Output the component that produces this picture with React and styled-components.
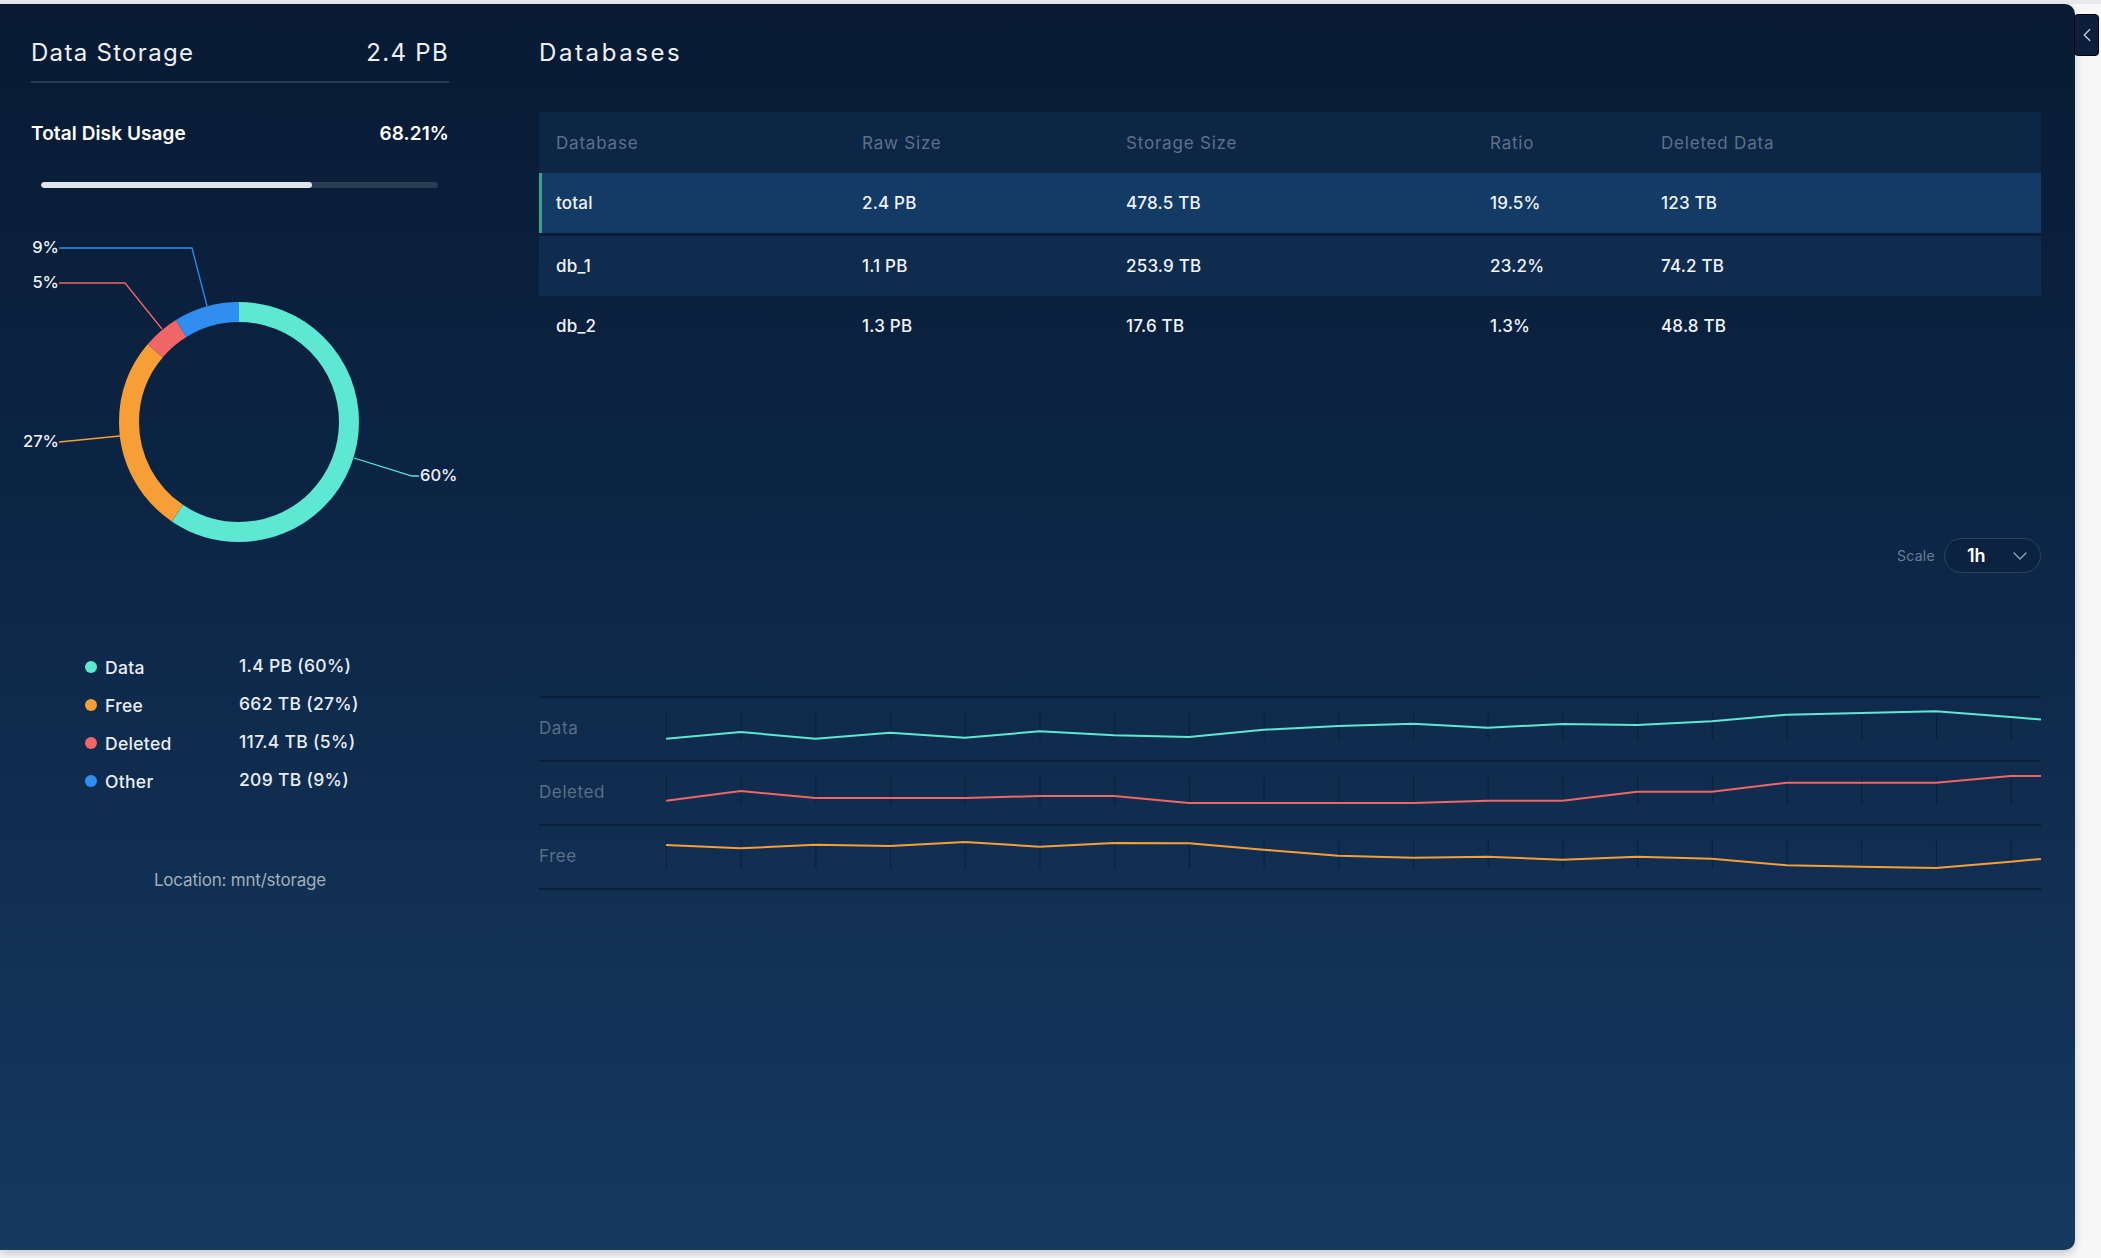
import React from "react"
import styled, { createGlobalStyle } from "styled-components"
import { ChevronDown, ChevronLeft } from "lucide-react"

const GlobalStyle = createGlobalStyle`
  html, body {
    margin: 0;
    padding: 0;
    background: #f6f6f7;
    font-family: Inter, "Open Sans", sans-serif;
  }
  * { box-sizing: border-box; }
`

const colors = {
  data: "#5ce8d2",
  free: "#f59f36",
  deleted: "#f06565",
  other: "#2f8eef",
}

const Page = styled.div`
  position: relative;
  width: 2101px;
  height: 1258px;
  padding-top: 4px;
  background: linear-gradient(180deg, #e8e9ec 0, #e8e9ec 4px, #f7f7f8 4px);
  overflow: hidden;
`

const Panel = styled.div`
  display: grid;
  grid-template-columns: 418px 1502px;
  column-gap: 90px;
  width: 2075px;
  height: 1246px;
  padding: 0 34px 0 31px;
  border-radius: 0 10px 10px 0;
  background: linear-gradient(180deg, #081a33 0%, #0c2545 40%, #15395f 100%);
  box-shadow: 0 4px 10px rgba(0, 0, 0, 0.18);
  color: #eef2f7;
`

const CollapseButton = styled.button`
  position: absolute;
  left: 2074px;
  top: 14px;
  width: 25px;
  height: 42px;
  padding: 0;
  display: flex;
  align-items: center;
  justify-content: center;
  background: #0b1f3b;
  border: 1.5px solid #000;
  border-radius: 4px;
  color: #c8d0da;
`

const Column = styled.div`
  display: flex;
  flex-direction: column;
`

const SectionHeader = styled.div`
  display: flex;
  justify-content: space-between;
  align-items: baseline;
  margin-top: 33px;
  padding-bottom: ${(p) => (p.$divider ? "12px" : "0")};
  border-bottom: ${(p) => (p.$divider ? "2px solid #2a3c54" : "none")};
  font-size: 24px;
  line-height: 32px;
  font-weight: 400;
  letter-spacing: ${(p) => (p.$divider ? "1.3px" : "2.6px")};
  color: #eef2f7;
`

const UsageRow = styled.div`
  display: flex;
  justify-content: space-between;
  margin-top: 39px;
  font-size: 19px;
  line-height: 24px;
  font-weight: 600;
  letter-spacing: 0.1px;
  color: #ffffff;
`

const Track = styled.div`
  margin: 36px 11px 0 10px;
  height: 6px;
  border-radius: 3px;
  background: #2b3d55;
  overflow: hidden;
`

const Fill = styled.div`
  height: 100%;
  border-radius: 3px;
  background: #dfe3ec;
`

const DonutSvg = styled.svg`
  display: block;
  margin-top: 41px;
  overflow: visible;
  font-family: Inter, "Open Sans", sans-serif;
`

const Legend = styled.div`
  display: grid;
  grid-template-columns: 154px auto;
  grid-auto-rows: 38px;
  margin: 89px 0 0 54px;
  font-size: 17.5px;
  font-weight: 500;
  color: #e8edf3;
`

const LegendLabel = styled.div`
  display: flex;
  align-items: center;
  gap: 8px;
  letter-spacing: 0.3px;
`

const LegendValue = styled.div`
  display: flex;
  align-items: center;
  margin-top: -3px;
  letter-spacing: 0.3px;
`

const Dot = styled.span`
  width: 12px;
  height: 12px;
  border-radius: 50%;
  background: ${(p) => p.$color};
`

const Location = styled.div`
  margin-top: 70px;
  text-align: center;
  font-size: 17px;
  line-height: 20px;
  letter-spacing: -0.2px;
  color: #a3adbb;
`

const Table = styled.div`
  display: flex;
  flex-direction: column;
  margin-top: 43px;
`

const TableRow = styled.div`
  display: grid;
  grid-template-columns: 306px 264px 364px 171px 1fr;
  align-items: center;
  height: ${(p) => (p.$head ? "61px" : p.$gap ? "63px" : "60px")};
  padding-left: 17px;
  background: ${(p) => p.$bg};
  border-bottom: ${(p) => (p.$gap ? "3px solid #0a1d37" : "none")};
  box-shadow: ${(p) => (p.$active ? "inset 3px 0 0 #3d9e8e" : "none")};
  font-size: 17px;
  font-weight: ${(p) => (p.$head ? 400 : 500)};
  letter-spacing: ${(p) => (p.$head ? "0.8px" : "0.2px")};
  color: ${(p) => (p.$head ? "#5d7189" : "#f0f4f8")};
`

const Controls = styled.div`
  display: flex;
  justify-content: flex-end;
  align-items: center;
  gap: 9px;
  margin-top: 182px;
`

const ControlLabel = styled.span`
  font-size: 14px;
  letter-spacing: 0.3px;
  color: #6c7e93;
`

const Select = styled.div`
  display: flex;
  align-items: center;
  justify-content: space-between;
  width: 97px;
  height: 35px;
  padding: 0 8px 0 22px;
  border: 1.5px solid #2c4460;
  border-radius: 18px;
  background: #0b2240;
  font-size: 18px;
  font-weight: 600;
  color: #ffffff;
`

const Chart = styled.div`
  margin-top: 123px;
  border-top: 2px solid #0a1f38;
`

const ChartRow = styled.div`
  display: grid;
  grid-template-columns: 127px 1375px;
  height: 64px;
  border-bottom: 2px solid #0a1f38;
`

const ChartLabel = styled.div`
  display: flex;
  align-items: center;
  padding-bottom: 2px;
  font-size: 17px;
  letter-spacing: 0.6px;
  color: #5a6e85;
`

const segments = [
  { key: "data", value: 60 },
  { key: "free", value: 27 },
  { key: "deleted", value: 5 },
  { key: "other", value: 9 },
]

const Donut = () => {
  const cx = 208
  const cy = 193
  const r = 110
  const circ = 2 * Math.PI * r
  const total = segments.reduce((s, x) => s + x.value, 0)
  let acc = 0
  return (
    <DonutSvg width="418" height="330" viewBox="0 0 418 330">
      <g transform={`rotate(-90 ${cx} ${cy})`}>
        {segments.map((s) => {
          const len = (s.value / total) * circ
          const el = (
            <circle
              key={s.key}
              cx={cx}
              cy={cy}
              r={r}
              fill="none"
              stroke={colors[s.key]}
              strokeWidth="20"
              strokeDasharray={`${len} ${circ - len}`}
              strokeDashoffset={-acc}
            />
          )
          acc += len
          return el
        })}
      </g>
      <g fill="none" strokeWidth="1.3">
        <polyline points="28,19 161,19 176,77" stroke={colors.other} />
        <polyline points="28,54 94,54 131,100" stroke={colors.deleted} />
        <polyline points="28,213 89,207" stroke={colors.free} />
        <polyline points="323,229 381,247 388,247" stroke={colors.data} />
      </g>
      <g fill="#eef2f7" fontSize="16.5" fontWeight="500" dominantBaseline="middle">
        <text x="28" y="19" textAnchor="end">9%</text>
        <text x="28" y="54" textAnchor="end">5%</text>
        <text x="28" y="213" textAnchor="end">27%</text>
        <text x="389" y="247">60%</text>
      </g>
    </DonutSvg>
  )
}

const series = [
  {
    name: "Data",
    color: colors.data,
    points: [40.7, 34, 40.7, 34.7, 39.7, 33.3, 37.3, 39, 31.7, 28, 25.7, 29.7, 26, 27, 23.3, 16.7, 15, 13.3, 19, 25],
  },
  {
    name: "Deleted",
    color: colors.deleted,
    points: [38.7, 29, 36, 36, 36, 34, 34, 41, 41, 41, 41, 38.7, 38.7, 29.7, 29.7, 20.7, 20.7, 20.7, 14, 14],
  },
  {
    name: "Free",
    color: colors.free,
    points: [19, 22.3, 18.7, 20, 16, 20.7, 17, 17.3, 23.7, 29.7, 31.7, 30.7, 33.7, 30.7, 32.7, 39.3, 40.7, 42, 35.7, 29],
  },
]

const STEP = 74.7

const Sparkline = ({ color, points }) => (
  <svg width="1375" height="62" viewBox="0 0 1375 62">
    {Array.from({ length: 19 }).map((_, i) => (
      <line key={i} x1={i * STEP + 0.5} x2={i * STEP + 0.5} y1="14" y2="42" stroke="#0a1f3b" strokeWidth="1" />
    ))}
    <polyline
      fill="none"
      stroke={color}
      strokeWidth="2"
      strokeLinejoin="round"
      points={points.map((y, i) => `${i * STEP},${y}`).join(" ")}
    />
  </svg>
)

const rows = [
  { name: "total", raw: "2.4 PB", storage: "478.5 TB", ratio: "19.5%", deleted: "123 TB", bg: "#133b65", active: true, gap: true },
  { name: "db_1", raw: "1.1 PB", storage: "253.9 TB", ratio: "23.2%", deleted: "74.2 TB", bg: "#0f2b4d" },
  { name: "db_2", raw: "1.3 PB", storage: "17.6 TB", ratio: "1.3%", deleted: "48.8 TB", bg: "transparent" },
]

const legend = [
  { label: "Data", value: "1.4 PB (60%)", color: colors.data },
  { label: "Free", value: "662 TB (27%)", color: colors.free },
  { label: "Deleted", value: "117.4 TB (5%)", color: colors.deleted },
  { label: "Other", value: "209 TB (9%)", color: colors.other },
]

export default function App() {
  return (
    <Page>
      <GlobalStyle />
      <Panel>
        <Column>
          <SectionHeader $divider>
            <span>Data Storage</span>
            <span>2.4 PB</span>
          </SectionHeader>
          <UsageRow>
            <span>Total Disk Usage</span>
            <span>68.21%</span>
          </UsageRow>
          <Track>
            <Fill style={{ width: "68.21%" }} />
          </Track>
          <Donut />
          <Legend>
            {legend.map((l) => (
              <React.Fragment key={l.label}>
                <LegendLabel>
                  <Dot $color={l.color} />
                  {l.label}
                </LegendLabel>
                <LegendValue>{l.value}</LegendValue>
              </React.Fragment>
            ))}
          </Legend>
          <Location>Location: mnt/storage</Location>
        </Column>

        <Column>
          <SectionHeader>
            <span>Databases</span>
          </SectionHeader>
          <Table>
            <TableRow $head $bg="#0d2646">
              <span>Database</span>
              <span>Raw Size</span>
              <span>Storage Size</span>
              <span>Ratio</span>
              <span>Deleted Data</span>
            </TableRow>
            {rows.map((r) => (
              <TableRow key={r.name} $bg={r.bg} $active={r.active} $gap={r.gap}>
                <span>{r.name}</span>
                <span>{r.raw}</span>
                <span>{r.storage}</span>
                <span>{r.ratio}</span>
                <span>{r.deleted}</span>
              </TableRow>
            ))}
          </Table>
          <Controls>
            <ControlLabel>Scale</ControlLabel>
            <Select>
              <span>1h</span>
              <ChevronDown size={24} strokeWidth={1.3} color="#9aa8b8" />
            </Select>
          </Controls>
          <Chart>
            {series.map((s) => (
              <ChartRow key={s.name}>
                <ChartLabel>{s.name}</ChartLabel>
                <Sparkline color={s.color} points={s.points} />
              </ChartRow>
            ))}
          </Chart>
        </Column>
      </Panel>
      <CollapseButton>
        <ChevronLeft size={22} strokeWidth={1.4} />
      </CollapseButton>
    </Page>
  )
}
